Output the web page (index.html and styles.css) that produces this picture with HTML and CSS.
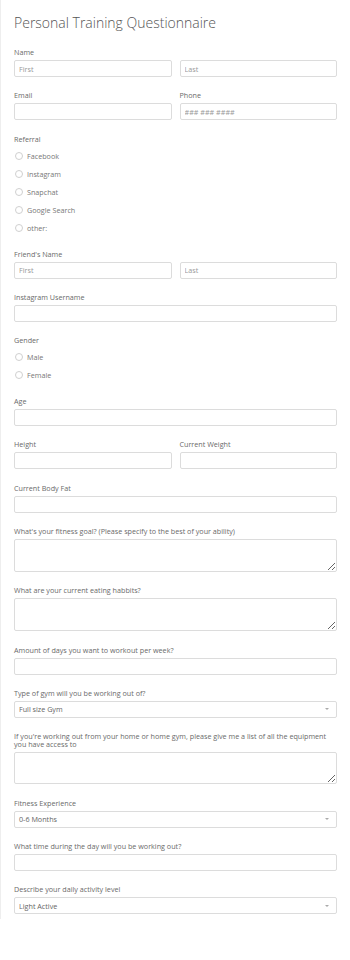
FILE: index.html
```html
<!DOCTYPE html>
<html lang="en">
<head>
<meta charset="utf-8">
<title>Personal Training Questionnaire</title>
<link rel="stylesheet" href="styles.css">
</head>
<body>
<div class="form">
  <h1 class="title">Personal Training Questionnaire</h1>

  <div class="field">
    <label class="label">Name</label>
    <div class="pair">
      <input class="input" placeholder="First">
      <input class="input" placeholder="Last">
    </div>
  </div>

  <div class="pair">
    <div class="field">
      <label class="label">Email</label>
      <input class="input">
    </div>
    <div class="field">
      <label class="label">Phone</label>
      <input class="input" placeholder="### ### ####">
    </div>
  </div>

  <div class="field choice">
    <label class="label">Referral</label>
    <div class="options">
      <div class="option"><span class="radio"></span>Facebook</div>
      <div class="option"><span class="radio"></span>Instagram</div>
      <div class="option"><span class="radio"></span>Snapchat</div>
      <div class="option"><span class="radio"></span>Google Search</div>
      <div class="option"><span class="radio"></span>other:</div>
    </div>
  </div>

  <div class="field">
    <label class="label">Friend's Name</label>
    <div class="pair">
      <input class="input" placeholder="First">
      <input class="input" placeholder="Last">
    </div>
  </div>

  <div class="field">
    <label class="label">Instagram Username</label>
    <input class="input">
  </div>

  <div class="field choice">
    <label class="label">Gender</label>
    <div class="options">
      <div class="option"><span class="radio"></span>Male</div>
      <div class="option"><span class="radio"></span>Female</div>
    </div>
  </div>

  <div class="field">
    <label class="label">Age</label>
    <input class="input">
  </div>

  <div class="pair">
    <div class="field">
      <label class="label">Height</label>
      <input class="input">
    </div>
    <div class="field">
      <label class="label">Current Weight</label>
      <input class="input">
    </div>
  </div>

  <div class="field">
    <label class="label">Current Body Fat</label>
    <input class="input">
  </div>

  <div class="field">
    <label class="label">What's your fitness goal? (Please specify to the best of your ability)</label>
    <textarea class="input textarea"></textarea>
  </div>

  <div class="field">
    <label class="label">What are your current eating habbits?</label>
    <textarea class="input textarea"></textarea>
  </div>

  <div class="field">
    <label class="label">Amount of days you want to workout per week?</label>
    <input class="input">
  </div>

  <div class="field">
    <label class="label">Type of gym will you be working out of?</label>
    <div class="input select"><span>Full size Gym</span><span class="arrow"></span></div>
  </div>

  <div class="field">
    <label class="label">If you're working out from your home or home gym, please give me a list of all the equipment you have access to</label>
    <textarea class="input textarea short"></textarea>
  </div>

  <div class="field">
    <label class="label">Fitness Experience</label>
    <div class="input select"><span>0-6 Months</span><span class="arrow"></span></div>
  </div>

  <div class="field">
    <label class="label">What time during the day will you be working out?</label>
    <input class="input">
  </div>

  <div class="field last">
    <label class="label">Describe your daily activity level</label>
    <div class="input select"><span>Light Active</span><span class="arrow"></span></div>
  </div>
</div>
</body>
</html>
```

FILE: styles.css
```css
* { box-sizing: border-box; }
body {
  margin: 0;
  background: #fff;
  font-family: "Open Sans", sans-serif;
}
.form {
  width: 350px;
  border-left: 1px solid #eeeeee;
  padding: 13px 13px 5px 13px;
}
.title {
  margin: 0 0 15px;
  font-size: 14px;
  font-weight: 300;
  line-height: 20px;
  color: #555;
}
.field { margin-bottom: 14.3px; }
.field.choice { margin-bottom: 13px; }
.field.last { margin-bottom: 0; }
.label {
  display: block;
  font-size: 7.2px;
  line-height: 8px;
  color: #6a6a6a;
  margin-bottom: 4px;
}
.pair {
  display: grid;
  grid-template-columns: 1fr 1fr;
  column-gap: 8px;
}
.input {
  display: block;
  width: 100%;
  height: 17px;
  margin: 0;
  border: 1px solid #dcdcdc;
  border-radius: 2px;
  padding: 0 4px;
  background: #fff;
  font-family: "Open Sans", sans-serif;
  font-size: 7.2px;
  color: #666;
  outline: none;
}
.input::placeholder { color: #999; }
.textarea {
  height: 33px;
  resize: vertical;
}
.textarea.short { height: 32px; }
.select {
  display: flex;
  align-items: center;
  justify-content: space-between;
  padding: 0 7px 0 4px;
}
.arrow {
  width: 0;
  height: 0;
  border-left: 2px solid transparent;
  border-right: 2px solid transparent;
  border-top: 2px solid #aaa;
}
.options { display: flex; flex-direction: column; }
.option {
  display: flex;
  align-items: center;
  height: 18px;
  font-size: 7.2px;
  color: #777;
}
.radio {
  width: 8px;
  height: 8px;
  border: 1px solid #d0d0d0;
  border-radius: 50%;
  margin: 0 4px 0 1px;
}
```
